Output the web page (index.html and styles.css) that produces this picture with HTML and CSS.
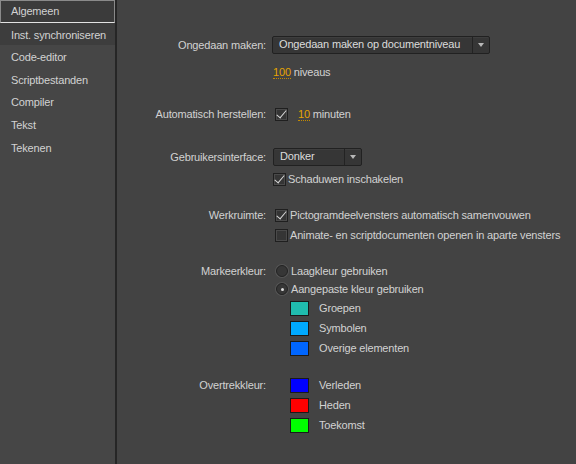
FILE: index.html
```html
<!DOCTYPE html>
<html lang="nl">
<head>
    <meta charset="UTF-8">
    <title>Voorkeuren</title>
    <link rel="stylesheet" href="styles.css">
</head>
<body>
    <div class="sidebar">
        <div class="nav-item selected">Algemeen</div>
        <div class="nav-item hover">Inst. synchroniseren</div>
        <div class="nav-item">Code-editor</div>
        <div class="nav-item">Scriptbestanden</div>
        <div class="nav-item">Compiler</div>
        <div class="nav-item">Tekst</div>
        <div class="nav-item">Tekenen</div>
    </div>
    <div class="main">
        <div class="section">
            <div class="label">Ongedaan maken:</div>
            <div class="controls">
                <div class="line">
                    <div class="select wide">
                        <span class="select-text">Ongedaan maken op documentniveau</span>
                        <span class="select-arrow"></span>
                    </div>
                </div>
                <div class="line gap7"><span class="num">100</span>&nbsp;niveaus</div>
            </div>
        </div>

        <div class="section s2">
            <div class="label">Automatisch herstellen:</div>
            <div class="controls">
                <div class="line">
                    <span class="check on"></span>
                    <span class="num spaced">10</span>&nbsp;minuten
                </div>
            </div>
        </div>

        <div class="section s3">
            <div class="label">Gebruikersinterface:</div>
            <div class="controls">
                <div class="line">
                    <div class="select short">
                        <span class="select-text">Donker</span>
                        <span class="select-arrow"></span>
                    </div>
                </div>
                <div class="line gap2"><span class="check on tight"></span>Schaduwen inschakelen</div>
            </div>
        </div>

        <div class="section s4">
            <div class="label">Werkruimte:</div>
            <div class="controls">
                <div class="line"><span class="check on"></span>Pictogramdeelvensters automatisch samenvouwen</div>
                <div class="line"><span class="check"></span>Animate- en scriptdocumenten openen in aparte vensters</div>
            </div>
        </div>

        <div class="section s5">
            <div class="label short-line">Markeerkleur:</div>
            <div class="controls">
                <div class="line short-line"><span class="radio"></span>Laagkleur gebruiken</div>
                <div class="line short-line"><span class="radio on"></span>Aangepaste kleur gebruiken</div>
                <div class="line swatch-line"><span class="swatch teal"></span>Groepen</div>
                <div class="line swatch-line"><span class="swatch sky"></span>Symbolen</div>
                <div class="line swatch-line"><span class="swatch azure"></span>Overige elementen</div>
            </div>
        </div>

        <div class="section s5">
            <div class="label">Overtrekkleur:</div>
            <div class="controls">
                <div class="line swatch-line"><span class="swatch blue"></span>Verleden</div>
                <div class="line swatch-line"><span class="swatch red"></span>Heden</div>
                <div class="line swatch-line"><span class="swatch green"></span>Toekomst</div>
            </div>
        </div>
    </div>
</body>
</html>
```

FILE: styles.css
```css
body {
    margin: 0;
    display: flex;
    height: 464px;
    background: #434343;
    font-family: 'Liberation Sans', Arial, sans-serif;
    font-size: 11px;
    letter-spacing: -0.17px;
    color: #d2d2d2;
    overflow: hidden;
}
.sidebar {
    width: 115px;
    flex-shrink: 0;
    background: #464646;
    border-right: 2px solid #262626;
}
.nav-item {
    height: 22.6px;
    line-height: 24px;
    padding-left: 11px;
    box-sizing: border-box;
    white-space: nowrap;
}
.nav-item.selected {
    background: #3b3b3b;
    border: 1px solid #8a8a8a;
    border-bottom-color: #e2e2e2;
    padding-left: 10px;
    line-height: 21px;
}
.nav-item.hover { background: #3d3d3d; }

.main {
    flex: 1;
    padding-top: 35px;
}
.section {
    display: grid;
    grid-template-columns: 149px 1fr;
    column-gap: 7px;
}
.s2 { margin-top: 22px; }
.s3 { margin-top: 23px; }
.s4 { margin-top: 16px; }
.s5 { margin-top: 17px; }
.label {
    text-align: right;
    line-height: 20px;
    height: 20px;
    white-space: nowrap;
}
.line {
    display: flex;
    align-items: center;
    height: 20px;
    white-space: nowrap;
}
.gap7 { margin-top: 7px; }
.gap2 { margin-top: 2px; }
.label.short-line, .line.short-line { height: 18px; line-height: 18px; }

.select {
    display: flex;
    height: 18px;
    box-sizing: border-box;
    background: #363636;
    border: 1px solid #212121;
    border-radius: 2px;
    box-shadow: inset 0 1px 0 #3e3e3e;
    color: #dcdcdc;
}
.select.wide { width: 218px; margin-left: -1px; }
.select.short { width: 89px; }
.select-text {
    flex: 1;
    padding-left: 6px;
    line-height: 15px;
    border-right: 1px solid #232323;
}
.select-arrow {
    width: 16px;
    position: relative;
}
.select-arrow::after {
    content: "";
    position: absolute;
    left: 5px;
    top: 6px;
    border-left: 3.5px solid transparent;
    border-right: 3.5px solid transparent;
    border-top: 4px solid #b8b8b8;
}

.num {
    color: #e6a300;
    border-bottom: 1px dotted #c48a00;
    line-height: 12px;
}

.check {
    width: 13px;
    height: 13px;
    box-sizing: border-box;
    background: #353535;
    border: 1px solid #1f1f1f;
    box-shadow: inset 0 0 0 1px #4a4a4a;
    margin: 0 2px 0 2px;
    position: relative;
    flex-shrink: 0;
}
.check.tight { margin-left: 0; margin-right: 2px; }
.num.spaced { margin-left: 8px; }
.check.on::after {
    content: "";
    position: absolute;
    left: 3px;
    top: -1px;
    width: 4px;
    height: 9px;
    border-right: 1.5px solid #d8d8d8;
    border-bottom: 1.5px solid #d8d8d8;
    transform: rotate(40deg);
}

.radio {
    width: 12px;
    height: 12px;
    box-sizing: border-box;
    border-radius: 50%;
    background: #363636;
    border: 1px solid #222;
    box-shadow: 0 0 0 1px #555;
    margin: 0 3px 0 3px;
    position: relative;
}
.radio.on::after {
    content: "";
    position: absolute;
    left: 3.5px;
    top: 3.5px;
    width: 3px;
    height: 3px;
    border-radius: 50%;
    background: #dcdcdc;
}

.swatch {
    width: 19px;
    height: 15px;
    box-sizing: border-box;
    border: 1px solid #1a1a1a;
    margin: 0 10px 0 17px;
}
.teal { background: #20bcae; }
.sky { background: #00aaff; }
.azure { background: #0066ff; }
.blue { background: #0000ff; }
.red { background: #ff0000; }
.green { background: #00ff00; }
```
